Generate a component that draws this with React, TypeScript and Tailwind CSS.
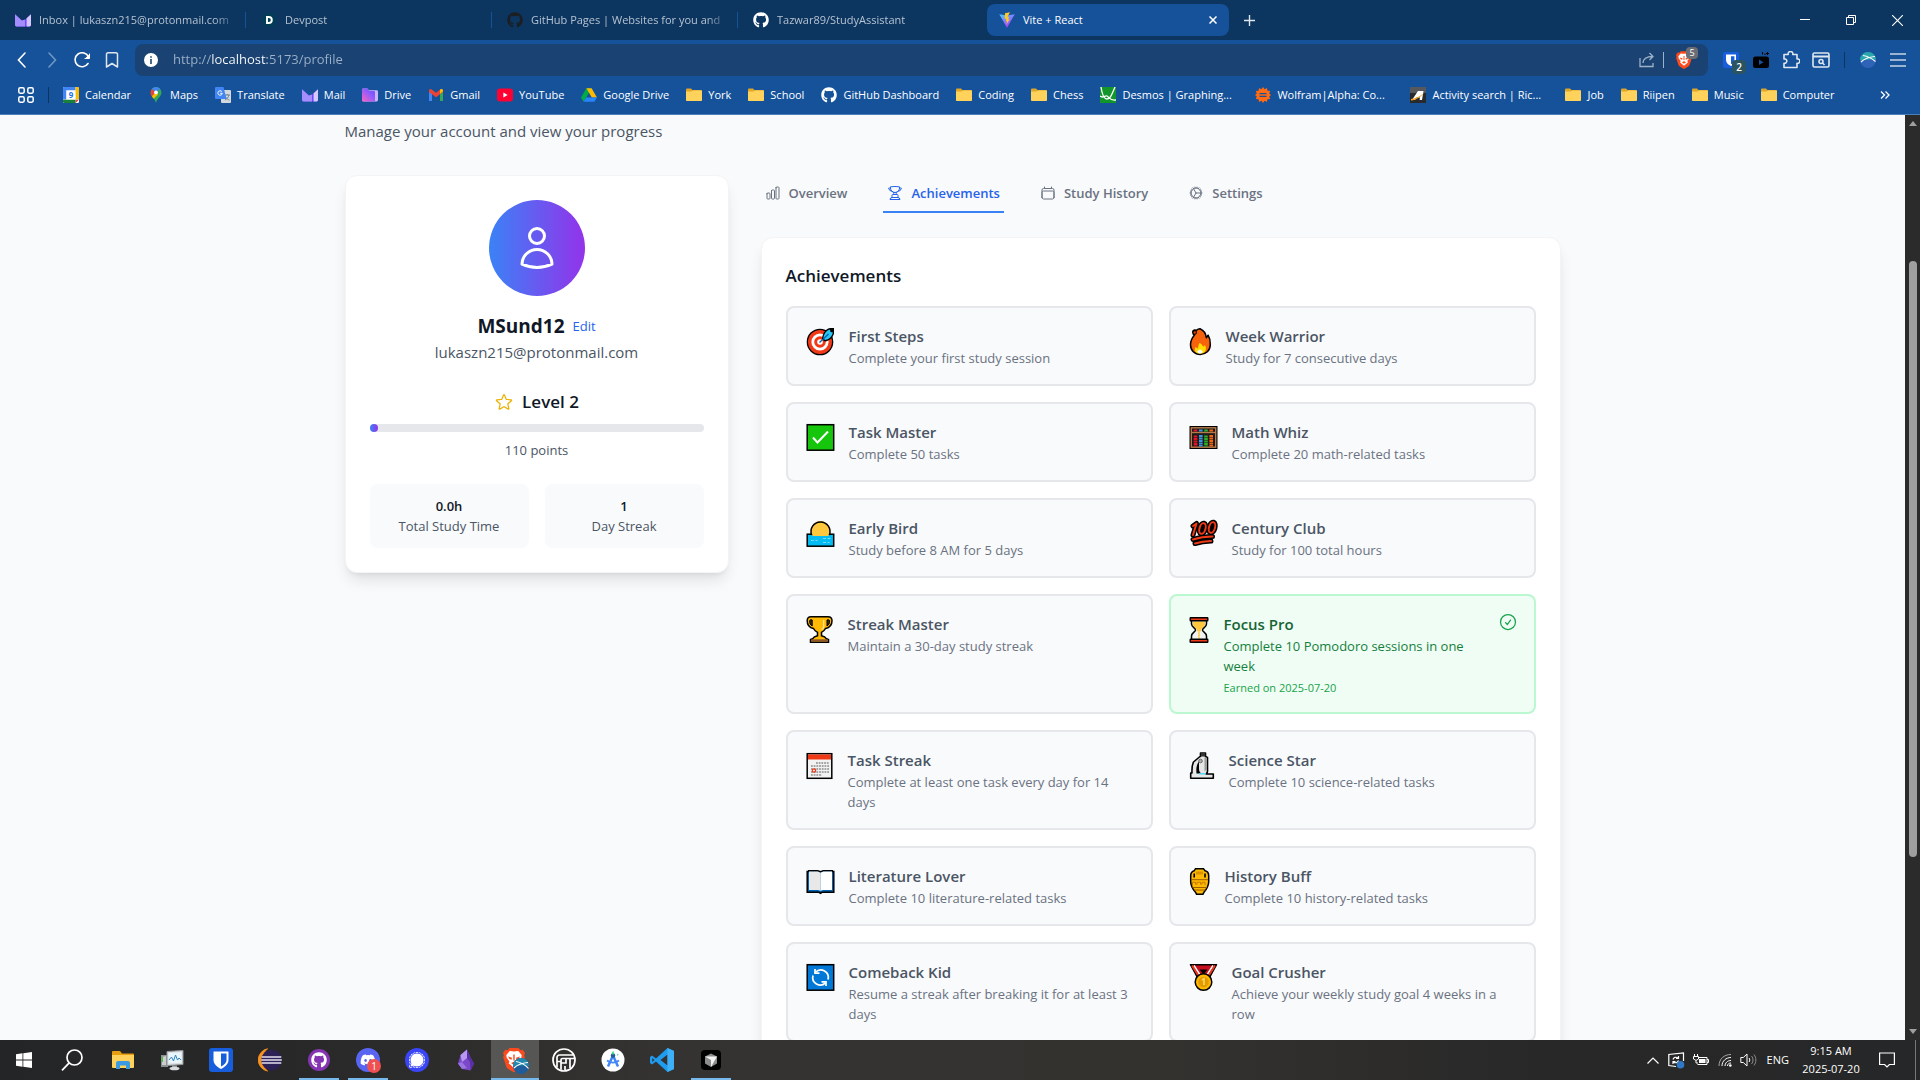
import React, { useState } from "react";
import {
    HiOutlineCalendar,
    HiOutlineChartBar,
    HiOutlineCheckCircle,
    HiOutlineCog,
    HiOutlineStar,
    HiOutlineTrophy,
    HiOutlineUser,
} from "react-icons/hi2";
import { FaDiscord, FaGithub } from "react-icons/fa";
import { SiSignal } from "react-icons/si";

/* ---------- Site icons ---------- */

const ProtonMailIcon = () => (
    <svg viewBox="0 0 16 16" className="w-4 h-4 shrink-0">
        <path d="M0 2.2 6.8 8.4a1.8 1.8 0 0 0 2.4 0L16 2.2V13a1.4 1.4 0 0 1-1.4 1.4H1.4A1.4 1.4 0 0 1 0 13Z" fill="#6d4aff" />
        <path d="M0 2.2 6.8 8.4 10 7.6v6.8H1.4A1.4 1.4 0 0 1 0 13Z" fill="#a58cff" />
        <path d="M11.6 6.3 16 2.2V13a1.4 1.4 0 0 1-1.4 1.4h-3Z" fill="#d6c8ff" />
    </svg>
);

const ProtonDriveIcon = () => (
    <svg viewBox="0 0 16 16" className="w-4 h-4 shrink-0">
        <defs>
            <linearGradient id="pdrive" x1="0" y1="1" x2="1" y2="0">
                <stop offset="0" stopColor="#ff62c0" />
                <stop offset="0.6" stopColor="#8c5cff" />
                <stop offset="1" stopColor="#6d4aff" />
            </linearGradient>
        </defs>
        <path d="M0 3a1.4 1.4 0 0 1 1.4-1.4h4l1.6 1.6h7.6A1.4 1.4 0 0 1 16 4.6V13a1.4 1.4 0 0 1-1.4 1.4H1.4A1.4 1.4 0 0 1 0 13Z" fill="#c9b6ff" />
        <path d="M0 3a1.4 1.4 0 0 1 1.4-1.4h4L7.4 4h4.4A1.2 1.2 0 0 1 13 5.2v9.2H1.4A1.4 1.4 0 0 1 0 13Z" fill="url(#pdrive)" />
    </svg>
);

const DevpostIcon = () => (
    <svg viewBox="0 0 16 16" className="w-4 h-4 shrink-0">
        <path d="M4.2 1.4h7.6L15.6 8l-3.8 6.6H4.2L.4 8Z" fill="#003e54" />
        <path d="M6 5h1.8a3 3 0 0 1 0 6H6Z" fill="none" stroke="#fff" strokeWidth="1.9" />
    </svg>
);

const ViteIcon = () => (
    <svg viewBox="0 0 16 16" className="w-4 h-4 shrink-0">
        <defs>
            <linearGradient id="vite" x1="0" y1="0" x2="0.6" y2="1">
                <stop offset="0" stopColor="#41d1ff" />
                <stop offset="1" stopColor="#bd34fe" />
            </linearGradient>
        </defs>
        <path d="M.3 2.2 8 15.8 15.7 2.2 8.2 3.6Z" fill="url(#vite)" />
        <path d="M11 .2 6 1.2 5.6 7l1.8-.4-.6 2.8 1.4-.4-.8 3.6 3.4-5.4-1.6.3.8-2.8-1.6.3Z" fill="#ffcb22" />
    </svg>
);

const CalendarFavicon = () => (
    <svg viewBox="0 0 16 16" className="w-4 h-4 shrink-0">
        <rect width="16" height="16" rx="1.5" fill="#fff" />
        <path d="M0 12.5V1.5A1.5 1.5 0 0 1 1.5 0H12.5v3.2H3.2v9.3Z" fill="#4285f4" />
        <path d="M12.5 0h2A1.5 1.5 0 0 1 16 1.5v11h-3.3Z" fill="#fbbc04" />
        <path d="M0 12.7h12.6V16H1.5A1.5 1.5 0 0 1 0 14.5Z" fill="#188038" />
        <path d="M12.6 12.7H16L12.6 16Z" fill="#ea4335" />
        <text x="8" y="11" fontSize="8" fontWeight="700" textAnchor="middle" fill="#1a73e8">9</text>
    </svg>
);

const MapsIcon = () => (
    <svg viewBox="0 0 16 16" className="w-4 h-4 shrink-0">
        <path d="M8 0a5.4 5.4 0 0 1 5.4 5.4C13.4 9.5 9.3 10.9 8 16 6.7 10.9 2.6 9.5 2.6 5.4A5.4 5.4 0 0 1 8 0Z" fill="#34a853" />
        <path d="M2.6 5.4A5.4 5.4 0 0 1 4 1.8L8 5.4 3.8 9.2A6 6 0 0 1 2.6 5.4Z" fill="#ea4335" />
        <path d="M4 1.8A5.4 5.4 0 0 1 12 1.8L8 5.8Z" fill="#4285f4" />
        <path d="M3.8 9.2 8 5.4l2 2-4.4 4.4Z" fill="#fbbc04" />
        <circle cx="8" cy="5.4" r="1.9" fill="#fff" />
    </svg>
);

const TranslateIcon = () => (
    <svg viewBox="0 0 16 16" className="w-4 h-4 shrink-0">
        <rect x="6" y="3" width="10" height="13" rx="1" fill="#d5d8dc" />
        <path d="M9.5 8H15M12.2 7v1M14 8c-.5 2.3-2 4-4 5M10.5 9.5c.8 1.8 2.2 3 4 3.6" stroke="#607d8b" strokeWidth="0.9" fill="none" />
        <path d="M1 0h7.5l3 12H1a1 1 0 0 1-1-1V1a1 1 0 0 1 1-1Z" fill="#4285f4" />
        <path d="M6.8 4.6a2.2 2.2 0 1 0 .5 1.7H5.2" stroke="#fff" strokeWidth="1" fill="none" />
    </svg>
);

const GmailIcon = () => (
    <svg viewBox="0 0 16 16" className="w-4 h-4 shrink-0">
        <path d="M1 14V4l3 2v8Z" fill="#4285f4" />
        <path d="M12 14V6l3-2v10Z" fill="#34a853" />
        <path d="M1 5V3.500a1.500 1.500 0 0 1 2.400-1.200L8 5.800l4.600-3.500A1.500 1.500 0 0 1 15 3.500V5L8 10.200Z" fill="#ea4335" />
        <path d="M12 2.800A1.600 1.600 0 0 1 15 3.500v1L12 6.700Z" fill="#fbbc04" />
    </svg>
);

const YouTubeIcon = () => (
    <svg viewBox="0 0 16 16" className="w-4 h-4 shrink-0">
        <rect y="1.500" width="16" height="13" rx="3" fill="#ff0033" />
        <path d="M6.4 5.600v4.800L10.600 8Z" fill="#fff" />
    </svg>
);

const GoogleDriveIcon = () => (
    <svg viewBox="0 0 16 16" className="w-4 h-4 shrink-0">
        <path d="M5.4 1.200h5.200L8 5.800 2.700 14.800 0 10.400Z" fill="#00ac47" />
        <path d="M5.4 1.200h5.200L16 10.400h-5.200Z" fill="#ffba00" />
        <path d="M5.300 10.400H16l-2.700 4.400H2.700Z" fill="#2684fc" />
    </svg>
);

const FolderIcon = () => (
    <svg viewBox="0 0 16 16" className="w-4 h-4 shrink-0">
        <path d="M0 2.500a1 1 0 0 1 1-1h4l1.500 1.500H15a1 1 0 0 1 1 1V13H0Z" fill="#dfa62a" />
        <path d="M0 4.500h5.500L7 3.500h8.200a.8.800 0 0 1 .8.800V13.200a.8.800 0 0 1-.8.800H.8a.8.800 0 0 1-.8-.8Z" fill="#ffd35b" />
    </svg>
);

const DesmosIcon = () => (
    <svg viewBox="0 0 16 16" className="w-4 h-4 shrink-0">
        <rect width="16" height="16" fill="#12962c" />
        <path d="M1 0c1 7 3 12 6 12s4-2.500 8-12" fill="none" stroke="#fff" strokeWidth="1.300" />
        <path d="M0 9c3 3 5-1 7 0s3 5 9 4" fill="none" stroke="#fff" strokeWidth="1.300" />
    </svg>
);

const WolframIcon = () => (
    <svg viewBox="0 0 16 16" className="w-4 h-4 shrink-0">
        <path d="m8 0 1.600 2.300L12 1l.4 2.800 2.800.2-1 2.500L16 8l-1.800 1.500 1 2.500-2.800.2L12 15l-2.400-1.300L8 16l-1.600-2.300L4 15l-.4-2.800L.8 12l1-2.500L0 8l1.800-1.500L.8 4l2.800-.2L4 1l2.400 1.300Z" fill="#ff6a13" />
        <path d="M4.500 6h7v1.300h-7Zm0 2.800h7v1.300h-7Z" fill="#15529a" />
    </svg>
);

const ActivityIcon = () => (
    <svg viewBox="0 0 16 16" className="w-4 h-4 shrink-0">
        <rect width="16" height="16" fill="#2a2a2c" />
        <rect width="16" height="6" fill="#57585b" />
        <path d="M2 13 8 4h5.500L12 13H9.600l.4-2.500H6.500L5 13Z" fill="#fff" />
        <path d="M1 12c5-.5 9-3 13-6-3 4-8 7-13 7.500Z" fill="#f5a11c" />
    </svg>
);

const BraveIcon = ({ className }: { className: string }) => (
    <svg viewBox="0 0 22 24" className={className}>
        <path d="M6.500 0h9l2 2.200 2.200-.4L22 5l-.8 2.200.6 2-3 9.300c-.4 1.200-1 1.800-2 2.500L12.500 23.600a2.600 2.600 0 0 1-3 0L5.200 21c-1-.7-1.600-1.300-2-2.500L.2 9.200l.6-2L0 5l2.300-3.200 2.200.4Z" fill="#fb4a1e" />
        <path d="M11 3.500c1.500 0 3-.7 4.500-.3L18.700 7l-.3 2.500-2.800 4 .7 2-2 1.500L11 20l-3.300-3-2-1.500.7-2-2.800-4L3.300 7l3.200-3.800c1.500-.4 3 .3 4.500.3Z" fill="#fff" />
        <path d="m5 8.500 4 1.200-.5 2-2-.7ZM17 8.500l-4 1.200.5 2 2-.7ZM8 15l3-1.300L14 15l-3 2.300ZM10.300 6.500h1.400v6h-1.400Z" fill="#fb4a1e" />
    </svg>
);

/* ---------- Achievement pictures ---------- */

const TargetPic = () => (
    <svg viewBox="0 0 33 32" className="w-[33px] h-8">
        <circle cx="16" cy="18" r="13.300" fill="#000" />
        <circle cx="16" cy="18" r="12" fill="#f03a17" />
        <circle cx="16" cy="18" r="8.600" fill="#fff" />
        <circle cx="16" cy="18" r="5.800" fill="#f03a17" />
        <circle cx="16" cy="18" r="2.800" fill="#fff" />
        <path d="M18 15.500c0-5 3-10.500 8-11.500h4v5.500c-1 4-4.500 7.500-9 8Z" fill="#000" />
        <path d="M19.500 14.500c0-4 2.500-7.800 6.500-9l.5 2.500 2.500.5c-1.300 4.500-4 7-8 7.500Z" fill="#29c8f6" />
        <path d="m15.500 18.500 9-8.500" stroke="#0063b1" strokeWidth="1.300" />
    </svg>
);

const FlamePic = () => (
    <svg viewBox="0 0 27 32" className="w-[27px] h-8">
        <path d="M13 4.700c4.500 2 6 5 6.300 9l1.800-2.500c1.600 2.500 2.300 6 2.200 9.500-.2 6-4.300 9.700-10 9.700S3.500 26.500 3.500 20.500c0-4 1.500-6.500 4-9.500-2-.5-2.500-4.500 0-5l2 .3c1-1 2.200-1.600 3.500-1.600Z" fill="#f7630c" stroke="#000" strokeWidth="1.500" strokeLinejoin="round" />
        <circle cx="7.800" cy="8.500" r="1.800" fill="#c8420a" stroke="#000" strokeWidth="1" />
        <path d="M12.500 19c3.200 1 2.500 3 4 3.500 1 0 1-1.500 1.500-1.500 2.500 5-.5 8.600-4.800 8.600S6.300 27 8.500 23c1 0 1 1.500 1.800 1.500 1.500-1 .7-3.500 2.200-5.500Z" fill="#ffde00" />
        <path d="M10 27.500c1-.3 1.500-2 3-2 2 0 1.500 2 3 2-.5 1.300-1.500 2-3 2s-2.500-.7-3-2Z" fill="#fff" />
    </svg>
);

const CheckPic = () => (
    <svg viewBox="0 0 33 32" className="w-[33px] h-8">
        <rect x="3.200" y="4.700" width="26.500" height="25.500" fill="#16c60c" stroke="#000" strokeWidth="1.500" />
        <path d="m9 17.500 4.500 5L24 11.500" fill="none" stroke="#fff" strokeWidth="2" />
    </svg>
);

const AbacusPic = () => (
    <svg viewBox="0 0 33 32" className="w-[33px] h-8">
        <rect x="2.500" y="6" width="28" height="23" fill="#000" />
        <rect x="4.300" y="7.800" width="24.400" height="19.400" fill="#1b1b1b" stroke="#b87a4b" strokeWidth="1.400" />
        <path d="M4 12.500h25" stroke="#b87a4b" strokeWidth="1.400" />
        <g strokeWidth="3.600" strokeDasharray="2 0.500">
            <path d="M8.500 9.500v2.200M8.500 15.500v11" stroke="#e81224" />
            <path d="M13.800 9.500v2.200M13.800 15v11.500" stroke="#3a96dd" />
            <path d="M19 9.500v2.200M19 15.500v11" stroke="#2fae2a" />
            <path d="M24.200 9.500v2.200M24.200 15v11.500" stroke="#f7630c" />
        </g>
    </svg>
);

const SunrisePic = () => (
    <svg viewBox="0 0 33 32" className="w-[33px] h-8">
        <rect x="3.200" y="18.200" width="26.500" height="12" fill="#00bcf2" stroke="#000" strokeWidth="1.500" />
        <path d="M8.700 20a9.500 9.500 0 1 1 15.600 0Z" fill="#ffc83d" />
        <path d="M7.700 19a9.500 9.500 0 1 1 17.600 0" fill="none" stroke="#000" strokeWidth="1.500" />
        <path d="M19 22.500h3M23.500 22.500h3M7 24.500h3M11.500 24.500h2M19 26.500h3M23.500 26.500h2" stroke="#7fdcf7" strokeWidth="0.900" />
    </svg>
);

const HundredPic = () => (
    <svg viewBox="0 0 33 32" className="w-[33px] h-8" fill="none" strokeLinecap="round" strokeLinejoin="round">
        <g stroke="#000" strokeWidth="5">
            <path d="m6 10 3.500-2.500L6 19" />
            <ellipse cx="15.500" cy="12.500" rx="3" ry="5.500" transform="rotate(16 15.500 12.500)" fill="#000" />
            <ellipse cx="25" cy="11.500" rx="3" ry="5.500" transform="rotate(16 25 11.500)" fill="#000" />
            <path d="M6 23.500c6-2 13-3 19.500-3M8 27.500c6-1.800 11-2.300 16-2.500" />
        </g>
        <g stroke="#f03a17" strokeWidth="2">
            <path d="m6 10 3.500-2.500L6 19" />
            <ellipse cx="15.500" cy="12.500" rx="3" ry="5.500" transform="rotate(16 15.500 12.500)" />
            <ellipse cx="25" cy="11.500" rx="3" ry="5.500" transform="rotate(16 25 11.500)" />
            <path d="M6 23.500c6-2 13-3 19.500-3M8 27.500c6-1.800 11-2.300 16-2.500" />
        </g>
    </svg>
);

const TrophyPic = () => (
    <svg viewBox="0 0 32 32" className="w-8 h-8">
        <path d="M7 4.700h17c2.500 0 4 1.500 4 4 0 4.500-2.500 7-6.500 7.800-1 2-2.500 3-4 3.800v3.500c2 .5 4 1.500 5 3l2 .7v2.700H6.500v-2.700l2-.7c1-1.500 3-2.500 5-3v-3.500c-1.500-.8-3-1.800-4-3.800C5.500 15.700 3.200 13.200 3.200 8.700c0-2.500 1.300-4 3.800-4Z" fill="#ffb900" stroke="#000" strokeWidth="1.500" />
        <path d="M8.200 8v6C6.500 13 5.600 11.500 5.600 9c0-1 1-1.600 2.600-1ZM23 8v6c1.700-1 2.600-2.500 2.600-5 0-1-1-1.600-2.600-1Z" fill="#3b2a0a" stroke="#000" />
        <path d="M7.200 27.300h16.600v2.200H7.200Z" fill="#8e562e" />
        <path d="M19.700 8v7c-.3 1-1.200 2-2.200 2.500" fill="none" stroke="#ffe48a" strokeWidth="1.400" />
    </svg>
);

const HourglassPic = () => (
    <svg viewBox="0 0 25 32" className="w-[25px] h-8">
        <path d="M4.500 8v4c0 3 4 4 4 6s-4 2.500-4 6v4h15v-4c0-3.500-4-4-4-6s4-3 4-6V8Z" fill="#f2f2f2" stroke="#000" strokeWidth="1.500" />
        <path d="M6 9.500h12V13c-1 2.500-4 3.500-4 5.500V27h-4v-8.500C10 16.500 7 15 6 13Z" fill="#ffc83d" />
        <path d="M10 19.500v3L6.500 27h11L14 22.500v-3l-1.300-.5v8h-1.400v-8Z" fill="#f2f2f2" />
        <rect x="3.200" y="5.700" width="17.600" height="3" rx="0.500" fill="#f03a17" stroke="#000" strokeWidth="1.400" />
        <rect x="3.200" y="27.300" width="17.600" height="3" rx="0.500" fill="#f03a17" stroke="#000" strokeWidth="1.400" />
    </svg>
);

const CalendarPic = () => (
    <svg viewBox="0 0 32 32" className="w-8 h-8">
        <rect x="3.200" y="5.700" width="24.600" height="24.600" fill="#f2f2f2" stroke="#000" strokeWidth="1.500" />
        <rect x="4" y="6.500" width="23" height="5" fill="#f03a17" />
        <path d="M12 15h13M7 18h18M7 21h18M7 24h18M7 27h11" stroke="#8a8a8a" strokeWidth="1.700" strokeDasharray="1.800 0.900" />
        <circle cx="10" cy="22.500" r="1.700" fill="none" stroke="#f03a17" strokeWidth="1.200" />
    </svg>
);

const MicroscopePic = () => (
    <svg viewBox="0 0 30 32" className="w-[30px] h-8" strokeLinejoin="round">
        <path d="M13 8.500 6.500 14c-1.500 3-1.700 7-1.500 11H3.700v5.300h22.600V26H19c1.500-1 1.700-2.500 1.500-4V9.500l-2-1V5h-5v3.500Z" fill="#e6e6e6" stroke="#000" strokeWidth="1.600" />
        <path d="M12 13.500v7.500c0 2 1 3.500 2.500 4.500h-5c-.5-5 0-9 2.500-12Z" fill="#000" />
        <path d="M13.800 5h4.400v3.500h-4.400Z" fill="#333" />
        <path d="M17.500 9.500h2v12l-2 2Z" fill="#9a9a9a" />
        <path d="M12 25.800h7" stroke="#50d5f5" strokeWidth="1.400" />
        <circle cx="13.500" cy="13" r="1.800" fill="#b0b0b0" stroke="#555" strokeWidth="0.800" />
    </svg>
);

const BookPic = () => (
    <svg viewBox="0 0 33 32" className="w-[33px] h-8">
        <path d="M3.200 7.500h1.500V6.700h9l2.800 1 2.800-1h9v.8h1.500v20.800H18l-1.500 1-1.500-1H3.200Z" fill="#0063b1" stroke="#000" strokeWidth="1.500" />
        <path d="M5 7.500h8.800l2.700 1.200v18L13.800 26H5Z" fill="#e8e8e8" />
        <path d="M28 7.500h-8.800l-2.700 1.200v18l2.700-.7H28Z" fill="#fff" />
    </svg>
);

const AmphoraPic = () => (
    <svg viewBox="0 0 26 32" className="w-[26px] h-8">
        <path d="M8.500 4.700h8l1.500 2c2.500.5 3.700 2.500 3.700 5v6c0 4-2.200 7.500-4.700 10.500l-1 2H9.500l-1-2c-2.700-3-4.800-6.500-4.800-10.500v-6c0-2.500 1.300-4.500 3.600-5Z" fill="#ffb900" stroke="#000" strokeWidth="1.500" />
        <path d="M7.200 9.500v4M18 9.500v4" stroke="#000" strokeWidth="1.600" />
        <path d="M4.500 15.700h16.600M5.500 23.500h14.600M7 26h11.500" stroke="#9b5c00" strokeWidth="1" />
        <path d="M5.500 21.500v-3.300h3v2h1.500v-2h3.500v2h1.500v-2H18v3" fill="none" stroke="#c47a00" strokeWidth="1" />
        <path d="M9 7.500h7v3H9Z" fill="#d99200" />
    </svg>
);

const RefreshPic = () => (
    <svg viewBox="0 0 33 32" className="w-[33px] h-8">
        <rect x="3.200" y="4.700" width="26.500" height="25.500" fill="#0078d7" stroke="#000" strokeWidth="1.500" />
        <path d="M24 19.500a7.500 7.500 0 0 0-12.500-7.300M9 15.500a7.500 7.500 0 0 0 12.500 7.300" fill="none" stroke="#fff" strokeWidth="1.700" />
        <path d="M11 9v4.200h4.500M22 26v-4.200h-4.500" fill="none" stroke="#fff" strokeWidth="1.700" />
    </svg>
);

const MedalPic = () => (
    <svg viewBox="0 0 33 32" className="w-[33px] h-8">
        <path d="M3.500 4.700h26L22 18.500H11Z" fill="#c50f1f" stroke="#000" strokeWidth="1.500" strokeLinejoin="round" />
        <path d="M12.500 9.500h8l-4 5Z" fill="#000" />
        <path d="m7 5.500 7 11M26 5.500l-7 11" stroke="#fff" strokeWidth="1.500" />
        <path d="m5 5.500 7.500 12M28 5.500l-7.500 12" stroke="#f03a17" strokeWidth="1.800" />
        <circle cx="16.500" cy="22" r="8.300" fill="#ffb900" stroke="#000" strokeWidth="1.500" />
        <circle cx="16.500" cy="22" r="5.300" fill="#e39b00" />
        <path d="m15 20 2-1.300V25" fill="none" stroke="#ffd75e" strokeWidth="1.500" />
    </svg>
);

/* ---------- Data ---------- */

const browserTabs = [
    { title: "Inbox | lukaszn215@protonmail.com", icon: <ProtonMailIcon /> },
    { title: "Devpost", icon: <DevpostIcon /> },
    { title: "GitHub Pages | Websites for you and", icon: <FaGithub className="w-4 h-4 shrink-0 text-[#1b1f24]" /> },
    { title: "Tazwar89/StudyAssistant", icon: <FaGithub className="w-4 h-4 shrink-0 text-white" /> },
];

const bookmarks = [
    { title: "Calendar", icon: <CalendarFavicon /> },
    { title: "Maps", icon: <MapsIcon /> },
    { title: "Translate", icon: <TranslateIcon /> },
    { title: "Mail", icon: <ProtonMailIcon /> },
    { title: "Drive", icon: <ProtonDriveIcon /> },
    { title: "Gmail", icon: <GmailIcon /> },
    { title: "YouTube", icon: <YouTubeIcon /> },
    { title: "Google Drive", icon: <GoogleDriveIcon /> },
    { title: "York", icon: <FolderIcon /> },
    { title: "School", icon: <FolderIcon /> },
    { title: "GitHub Dashboard", icon: <FaGithub className="w-4 h-4 shrink-0" /> },
    { title: "Coding", icon: <FolderIcon /> },
    { title: "Chess", icon: <FolderIcon /> },
    { title: "Desmos | Graphing...", icon: <DesmosIcon />, long: true },
    { title: "Wolfram|Alpha: Co...", icon: <WolframIcon />, long: true },
    { title: "Activity search | Ric...", icon: <ActivityIcon />, long: true },
    { title: "Job", icon: <FolderIcon /> },
    { title: "Riipen", icon: <FolderIcon /> },
    { title: "Music", icon: <FolderIcon /> },
    { title: "Computer", icon: <FolderIcon /> },
];

const profileTabs = [
    { id: "overview", label: "Overview", icon: HiOutlineChartBar },
    { id: "achievements", label: "Achievements", icon: HiOutlineTrophy },
    { id: "history", label: "Study History", icon: HiOutlineCalendar },
    { id: "settings", label: "Settings", icon: HiOutlineCog },
];

type Achievement = {
    title: string;
    description: string;
    picture: React.ReactNode;
    earned?: string;
};

const achievements: Achievement[] = [
    { title: "First Steps", description: "Complete your first study session", picture: <TargetPic /> },
    { title: "Week Warrior", description: "Study for 7 consecutive days", picture: <FlamePic /> },
    { title: "Task Master", description: "Complete 50 tasks", picture: <CheckPic /> },
    { title: "Math Whiz", description: "Complete 20 math-related tasks", picture: <AbacusPic /> },
    { title: "Early Bird", description: "Study before 8 AM for 5 days", picture: <SunrisePic /> },
    { title: "Century Club", description: "Study for 100 total hours", picture: <HundredPic /> },
    { title: "Streak Master", description: "Maintain a 30-day study streak", picture: <TrophyPic /> },
    { title: "Focus Pro", description: "Complete 10 Pomodoro sessions in one week", picture: <HourglassPic />, earned: "2025-07-20" },
    { title: "Task Streak", description: "Complete at least one task every day for 14 days", picture: <CalendarPic /> },
    { title: "Science Star", description: "Complete 10 science-related tasks", picture: <MicroscopePic /> },
    { title: "Literature Lover", description: "Complete 10 literature-related tasks", picture: <BookPic /> },
    { title: "History Buff", description: "Complete 10 history-related tasks", picture: <AmphoraPic /> },
    { title: "Comeback Kid", description: "Resume a streak after breaking it for at least 3 days", picture: <RefreshPic /> },
    { title: "Goal Crusher", description: "Achieve your weekly study goal 4 weeks in a row", picture: <MedalPic /> },
];

/* ---------- Browser ---------- */

function TabStrip() {
    return (
        <div className="h-10 bg-[#0c3560] flex items-center text-[11px] text-[#b6c3d1]">
            {browserTabs.map((tab, i) => (
                <div key={tab.title} className="w-[246px] h-10 flex items-center relative">
                    <button className="flex items-center gap-2 pl-[15px] pr-2 w-full text-left">
                        {tab.icon}
                        <span className="flex-1 whitespace-nowrap [mask-image:linear-gradient(90deg,#000_88%,transparent)]">
                            {tab.title}
                        </span>
                    </button>
                    {i < 3 && <div className="absolute right-0 top-3 w-px h-4 bg-[#15529a]" />}
                </div>
            ))}
            <div className="w-[242px] h-8 ml-[3px] rounded-lg bg-[#15529a] text-white flex items-center px-3 gap-2">
                <ViteIcon />
                <span className="flex-1">Vite + React</span>
                <button aria-label="Close tab" className="w-4 h-4 flex items-center justify-center -mr-1">
                    <svg viewBox="0 0 8 8" className="w-2 h-2">
                        <path d="m0.500 0.500 7 7m0-7-7 7" stroke="#fff" strokeWidth="1.500" />
                    </svg>
                </button>
            </div>
            <button aria-label="New tab" className="w-10 h-8 flex items-center justify-center">
                <svg viewBox="0 0 12 12" className="w-[11px] h-[11px]">
                    <path d="M6 0v12M0 6h12" stroke="#dfe6ee" strokeWidth="1.500" />
                </svg>
            </button>
            <div className="ml-auto flex">
                <button aria-label="Minimize" className="w-[46px] h-10 flex items-center justify-center">
                    <svg viewBox="0 0 10 10" className="w-[10px] h-[10px]"><path d="M0 4.500h10" stroke="#fff" /></svg>
                </button>
                <button aria-label="Restore" className="w-[46px] h-10 flex items-center justify-center">
                    <svg viewBox="0 0 10 10" className="w-[10px] h-[10px]" fill="none" stroke="#fff">
                        <path d="M0.500 2.500h7v7h-7ZM2.500 2.500v-2h7v7h-2" />
                    </svg>
                </button>
                <button aria-label="Close" className="w-[46px] h-10 flex items-center justify-center">
                    <svg viewBox="0 0 10 10" className="w-[11px] h-[11px]"><path d="m0 0 10 10M10 0 0 10" stroke="#fff" /></svg>
                </button>
            </div>
        </div>
    );
}

function AddressBar() {
    const [url, setUrl] = useState("http://localhost:5173/profile");
    return (
        <div className="h-10 flex items-center pl-[7px] pr-[7px] text-white">
            <button aria-label="Back" className="w-[30px] h-8 flex items-center justify-center">
                <svg viewBox="0 0 16 16" className="w-4 h-4" fill="none" stroke="#fff" strokeWidth="1.600" strokeLinecap="round"><path d="M11 1 4.500 8l6.500 7" /></svg>
            </button>
            <button aria-label="Forward" className="w-[30px] h-8 flex items-center justify-center">
                <svg viewBox="0 0 16 16" className="w-4 h-4" fill="none" stroke="#6f97c4" strokeWidth="1.600" strokeLinecap="round"><path d="m5 1 6.500 7L5 15" /></svg>
            </button>
            <button aria-label="Reload" className="w-[30px] h-8 flex items-center justify-center">
                <svg viewBox="0 0 16 16" className="w-4 h-4" fill="none" stroke="#fff" strokeWidth="1.600" strokeLinecap="round">
                    <path d="M14 11.500A7 7 0 1 1 14.500 5" />
                    <path d="M15.500 2v4.500H11" fill="#fff" strokeWidth="1" />
                </svg>
            </button>
            <button aria-label="Bookmark" className="w-[30px] h-8 flex items-center justify-center">
                <svg viewBox="0 0 16 16" className="w-4 h-4" fill="none" stroke="#dfe6ee" strokeWidth="1.500" strokeLinejoin="round"><path d="M2.500 2A1.500 1.500 0 0 1 4 .8h8A1.500 1.500 0 0 1 13.500 2v13L8 11.500 2.500 15Z" /></svg>
            </button>
            <div className="flex-1 h-8 ml-2 rounded-lg bg-[#1a4373] flex items-center pl-[9px] pr-2">
                <svg viewBox="0 0 14 14" className="w-[14px] h-[14px] shrink-0">
                    <circle cx="7" cy="7" r="7" fill="#fff" />
                    <path d="M7 3.200v1.600M7 6v5" stroke="#1a4373" strokeWidth="1.600" />
                </svg>
                <input
                    aria-label="Address"
                    value={url}
                    onChange={(e) => setUrl(e.target.value)}
                    className="flex-1 ml-[15px] text-[13px] outline-none text-transparent caret-white bg-clip-text bg-[linear-gradient(90deg,#9db1c8_39px,#fff_39px,#fff_94px,#9db1c8_94px)]"
                />
                <button aria-label="Share">
                    <svg viewBox="0 0 16 16" className="w-4 h-4" fill="none" stroke="#9db1c8" strokeWidth="1.300">
                        <path d="M1 6v8.500h13V11M4 11c0-4 3-6.500 10-6.500M10.500 1 14 4.500 10.500 8" />
                    </svg>
                </button>
                <div className="w-px h-4 bg-[#9db1c8] mx-2" />
                <button aria-label="Brave Shields" className="relative ml-1 mr-2">
                    <BraveIcon className="w-4 h-[18px]" />
                    <span className="absolute -top-1 left-[10px] w-3 h-3 rounded-sm bg-[#6b6d75] text-white text-[9px] leading-3 text-center">5</span>
                </button>
            </div>
            <div className="flex items-center ml-2">
                <button aria-label="Bitwarden" className="w-[30px] h-8 flex items-center justify-center relative">
                    <svg viewBox="0 0 16 16" className="w-4 h-4">
                        <rect width="16" height="16" rx="2" fill="#175ddc" />
                        <path d="M3 2.500h10V8c0 3-2.500 5-5 6-2.500-1-5-3-5-6Z" fill="#fff" />
                        <path d="M8 4.200h3.400V8c0 2-1.600 3.300-3.400 4.200Z" fill="#175ddc" />
                    </svg>
                    <span className="absolute left-4 top-4 w-[14px] h-[14px] rounded-sm bg-[#2b5360] text-white text-[10px] font-semibold leading-[14px] text-center">2</span>
                </button>
                <button aria-label="Video extension" className="w-[30px] h-8 flex items-center justify-center">
                    <svg viewBox="0 0 16 16" className="w-4 h-4">
                        <rect y="4.500" width="16" height="11.500" rx="2.500" fill="#000" />
                        <path d="M6 7.500v5.500l4.500-2.700Z" fill="#15529a" />
                        <path d="M9.500 0v2.500M12 1.500v1.500M14.500 0v3M13 1.500h3" stroke="#000" />
                    </svg>
                </button>
                <button aria-label="Extensions" className="w-[30px] h-8 flex items-center justify-center">
                    <svg viewBox="0 0 18 18" className="w-[18px] h-[18px]" fill="none" stroke="#dfe6ee" strokeWidth="1.600" strokeLinejoin="round">
                        <path d="M2 3.500h4.200a2.400 2.400 0 1 1 4.600 0H15V8a2.200 2.200 0 1 1 0 4.200V16.500H2v-4.300A2.200 2.200 0 1 0 2 8Z" />
                    </svg>
                </button>
                <button aria-label="Search tabs" className="w-[30px] h-8 flex items-center justify-center">
                    <svg viewBox="0 0 18 16" className="w-[18px] h-4" fill="none" stroke="#dfe6ee" strokeWidth="1.600">
                        <rect x="1" y="1" width="16" height="14" rx="1.500" />
                        <path d="M1 4.500h16" strokeWidth="2" />
                        <circle cx="9" cy="9.500" r="2" />
                        <path d="m10.500 11 2 2" />
                    </svg>
                </button>
                <div className="w-px h-4 bg-[#0c3560] mx-2" />
                <button aria-label="Profile" className="w-[30px] h-8 flex items-center justify-center">
                    <svg viewBox="0 0 16 16" className="w-4 h-4">
                        <circle cx="8" cy="8" r="8" fill="#2f63b8" />
                        <path d="M0 8a8 8 0 0 1 16 0C11 6 6 9 0 8Z" fill="#2aa6ad" />
                        <path d="M1 10c3-3 8-5 14-5.500M3 3.500c3 .5 8 2 12.500 6" fill="none" stroke="#fff" strokeWidth="1.100" />
                    </svg>
                </button>
                <button aria-label="Menu" className="w-[30px] h-8 flex items-center justify-center">
                    <svg viewBox="0 0 16 14" className="w-4 h-[14px]"><path d="M0 1h16M0 7h16M0 13h16" stroke="#c5d3e3" strokeWidth="1.600" /></svg>
                </button>
            </div>
        </div>
    );
}

function BookmarkBar() {
    return (
        <nav className="h-[35px] flex items-center pb-1 text-[11px] text-white border-b border-[#4d80b8]">
            <button aria-label="All apps" className="ml-[18px] w-4 h-4">
                <svg viewBox="0 0 16 16" className="w-4 h-4" fill="none" stroke="#fff" strokeWidth="1.500">
                    <rect x="0.800" y="0.800" width="5.400" height="5.400" rx="1.400" />
                    <rect x="9.800" y="0.800" width="5.400" height="5.400" rx="1.400" />
                    <rect x="0.800" y="9.800" width="5.400" height="5.400" rx="1.400" />
                    <rect x="9.800" y="9.800" width="5.400" height="5.400" rx="1.400" />
                </svg>
            </button>
            <div className="w-px h-4 bg-[#0c3560] mx-[14px]" />
            <div className="flex items-center gap-[17px]">
                {bookmarks.map((item) => (
                    <a
                        key={item.title}
                        href="#"
                        className={`flex items-center gap-[6px] whitespace-nowrap ${item.long ? "min-w-[138px]" : ""}`}
                    >
                        {item.icon}
                        {item.title}
                    </a>
                ))}
            </div>
            <button aria-label="More bookmarks" className="ml-auto mr-[30px]">
                <svg viewBox="0 0 10 8" className="w-[10px] h-2" fill="none" stroke="#fff" strokeWidth="1.300"><path d="m1 0.500 3.500 3.500L1 7.500M5.500 0.500 9 4 5.500 7.500" /></svg>
            </button>
        </nav>
    );
}

/* ---------- Profile page ---------- */

function ProfileCard() {
    return (
        <section className="bg-white rounded-xl shadow-lg border border-gray-100 p-6 text-center">
            <div className="w-24 h-24 mx-auto rounded-full bg-linear-to-r/srgb from-[#3b82f6] to-[#9333ea] flex items-center justify-center">
                <HiOutlineUser className="w-12 h-12 text-white" />
            </div>
            <div className="mt-4 flex items-center justify-center gap-2">
                <h2 className="text-[19px] leading-7 font-bold text-gray-900">MSund12</h2>
                <button className="text-[13px] leading-5 text-[#2563eb]">Edit</button>
            </div>
            <p className="text-[15px] leading-6 text-gray-600">lukaszn215@protonmail.com</p>
            <div className="mt-6 flex items-center justify-center gap-2">
                <HiOutlineStar className="w-5 h-5 text-[#eab308]" />
                <span className="text-[17px] leading-7 font-semibold text-gray-900">Level 2</span>
            </div>
            <div className="mt-2 h-2 rounded-full bg-gray-200">
                <div className="w-2 h-2 rounded-full bg-linear-to-r/srgb from-[#3b82f6] to-[#9333ea]" />
            </div>
            <p className="mt-2 text-[13px] leading-5 text-gray-600">110 points</p>
            <div className="mt-6 grid grid-cols-2 gap-4 text-[13px] leading-5">
                <div className="bg-gray-50 rounded-lg p-3">
                    <div className="font-semibold text-gray-900">0.0h</div>
                    <div className="text-gray-600">Total Study Time</div>
                </div>
                <div className="bg-gray-50 rounded-lg p-3">
                    <div className="font-semibold text-gray-900">1</div>
                    <div className="text-gray-600">Day Streak</div>
                </div>
            </div>
        </section>
    );
}

function AchievementCard({ title, description, picture, earned }: Achievement) {
    return (
        <div className={`rounded-lg border-2 p-4 flex items-start gap-3 ${earned ? "bg-[#f0fdf4] border-[#bbf7d0]" : "bg-gray-50 border-gray-200"}`}>
            <div className="shrink-0">{picture}</div>
            <div className="flex-1">
                <h4 className={`text-[15px] leading-6 font-semibold ${earned ? "text-[#166534]" : "text-gray-600"}`}>{title}</h4>
                <p className={`text-[13px] leading-5 ${earned ? "text-[#15803d]" : "text-gray-500"}`}>{description}</p>
                {earned && <p className="mt-1 text-[11px] leading-4 text-[#16a34a]">Earned on {earned}</p>}
            </div>
            {earned && <HiOutlineCheckCircle className="w-5 h-5 shrink-0 text-[#16a34a]" />}
        </div>
    );
}

function ProfilePage() {
    const [activeTab, setActiveTab] = useState("achievements");
    return (
        <div className="max-w-7xl mx-auto px-8 pt-1">
            <p className="text-[15px] leading-6 text-gray-600 mb-8">Manage your account and view your progress</p>
            <div className="grid grid-cols-3 gap-8 items-start">
                <ProfileCard />
                <div className="col-span-2">
                    <div className="flex gap-8 mb-6">
                        {profileTabs.map(({ id, label, icon: Icon }) => (
                            <button
                                key={id}
                                onClick={() => setActiveTab(id)}
                                className={`flex items-center gap-2 px-1 py-2 border-b-2 text-[13px] leading-5 font-semibold ${
                                    activeTab === id ? "border-[#3b82f6] text-[#2563eb]" : "border-transparent text-gray-500"
                                }`}
                            >
                                <Icon className="w-4 h-4" />
                                {label}
                            </button>
                        ))}
                    </div>
                    <section className="bg-white rounded-xl shadow-lg border border-gray-100 p-6">
                        <h3 className="text-[17px] leading-7 font-semibold text-gray-900 mb-4">Achievements</h3>
                        <div className="grid grid-cols-2 gap-4">
                            {achievements.map((a) => (
                                <AchievementCard key={a.title} {...a} />
                            ))}
                        </div>
                    </section>
                </div>
            </div>
        </div>
    );
}

function Scrollbar() {
    return (
        <div className="w-[15px] shrink-0 bg-[#2b2b2b] flex flex-col items-center py-[6px]">
            <svg viewBox="0 0 8 5" className="w-2 h-[5px]"><path d="M4 0 8 5H0Z" fill="#9f9f9f" /></svg>
            <div className="flex-1 w-2 flex flex-col">
                <div className="basis-[15%]" />
                <div className="basis-[66%] rounded-full bg-[#9f9f9f]" />
            </div>
            <svg viewBox="0 0 8 5" className="w-2 h-[5px]"><path d="M0 0h8L4 5Z" fill="#9f9f9f" /></svg>
        </div>
    );
}

/* ---------- Taskbar ---------- */

const taskbarApps = [
    {
        name: "File Explorer",
        icon: (
            <svg viewBox="0 0 24 24" className="w-6 h-6">
                <path d="M1 4a1 1 0 0 1 1-1h7l2 2.500h11a1 1 0 0 1 1 1V10H1Z" fill="#e59f10" />
                <path d="M1 7h22v12a1 1 0 0 1-1 1H2a1 1 0 0 1-1-1Z" fill="#ffd35b" />
                <path d="M5 21v-6a2 2 0 0 1 2-2h10a2 2 0 0 1 2 2v6h-4v-3.500H9V21Z" fill="#3c9be0" />
            </svg>
        ),
    },
    {
        name: "Task Manager",
        icon: (
            <svg viewBox="0 0 24 24" className="w-6 h-6">
                <path d="M1 7h7v12H1Z" fill="#8b9090" />
                <path d="m2 9 4-1v9H2Z" fill="#c8cfcc" />
                <rect x="1.500" y="9" width="1.500" height="5" fill="#59b84c" />
                <path d="m7 3.500 16-1v14l-16 1Z" fill="#d9dde0" stroke="#8f9599" />
                <path d="m8.500 5 13-.8v10.600l-13 .8Z" fill="#eaf5fc" />
                <path d="m9 12 2.500-3 2 4 2-6 2 5 1.500-2 2 2" fill="none" stroke="#2b86c5" strokeWidth="1" />
                <path d="M12 17.500h5V20h-5Z" fill="#9aa0a4" />
                <ellipse cx="14.500" cy="20.500" rx="5" ry="1.800" fill="#d9dde0" />
            </svg>
        ),
    },
    {
        name: "Bitwarden",
        icon: (
            <svg viewBox="0 0 24 24" className="w-6 h-6">
                <rect width="24" height="24" rx="3" fill="#175ddc" />
                <path d="M4.500 3.500h15V12c0 4-3.500 7-7.500 9-4-2-7.500-5-7.500-9Z" fill="#fff" />
                <path d="M12 5.500h5.500V12c0 2.800-2.500 5-5.500 6.600Z" fill="#175ddc" />
            </svg>
        ),
    },
    {
        name: "Eclipse",
        icon: (
            <svg viewBox="0 0 24 24" className="w-6 h-6">
                <path d="M9.500.8A11.300 11.300 0 0 0 9.500 23 14 14 0 0 1 9.500.8Z" fill="#f7941e" stroke="#f7941e" />
                <circle cx="13.500" cy="12" r="10.300" fill="#2c2255" />
                <path d="M3.700 9h19.600M3.200 12h20.600M3.700 15h19.600" stroke="#e4e0f0" strokeWidth="1.500" />
            </svg>
        ),
    },
    {
        name: "GitHub Desktop",
        open: true,
        icon: (
            <span className="w-[22px] h-[22px] rounded-full bg-[#8534b3] flex items-center justify-center">
                <FaGithub className="w-4 h-4 text-white" />
            </span>
        ),
    },
    {
        name: "Discord",
        open: true,
        icon: (
            <span className="relative w-6 h-6 rounded-full bg-[#5865f2] flex items-center justify-center">
                <FaDiscord className="w-4 h-4 text-white" />
                <span className="absolute left-[11px] top-[11px] w-[14px] h-[14px] rounded-full bg-[#f0504f] text-white text-[10px] leading-[14px] text-center">1</span>
            </span>
        ),
    },
    {
        name: "Signal",
        icon: (
            <span className="w-6 h-6 rounded-full bg-[#3a45f5] flex items-center justify-center">
                <SiSignal className="w-4 h-4 text-white" />
            </span>
        ),
    },
    {
        name: "Obsidian",
        icon: (
            <svg viewBox="0 0 24 24" className="w-6 h-6">
                <path d="M13 1.500 6.500 7 4 15.500l4 5.500 8.500 1.500 3.500-7-3-5Z" fill="#7b48c9" />
                <path d="M13 1.500 6.500 7 8 14l5-4Z" fill="#b79aef" />
                <path d="m8 14-4 1.500L8 21l5-1Z" fill="#9a74e0" />
                <path d="m13 10 3 4 .5 8.500L20 15.500l-3-5-4-9Z" fill="#5a2fa5" />
            </svg>
        ),
    },
    {
        name: "Brave",
        active: true,
        icon: (
            <span className="relative w-6 h-6">
                <BraveIcon className="w-[22px] h-6" />
                <svg viewBox="0 0 16 16" className="absolute left-[10px] top-[10px] w-4 h-4">
                    <circle cx="8" cy="8" r="8" fill="#1f5c9c" />
                    <path d="M0 8a8 8 0 0 1 16 0C11 6 6 9 0 8Z" fill="#2388ad" />
                    <path d="M1 10c3-3 8-5 14-5.500M3 3.500c3 .5 8 2 12.500 7" fill="none" stroke="#fff" strokeWidth="1.100" />
                </svg>
            </span>
        ),
    },
    {
        name: "FTP client",
        icon: (
            <svg viewBox="0 0 24 24" className="w-6 h-6" fill="none" stroke="#fff" strokeWidth="1.700">
                <circle cx="12" cy="12" r="11" />
                <path d="M5 19.500V9.500a2.500 2.500 0 0 1 2.500-2.500H21M5 13.500h3.500M9 21.500V12a1.500 1.500 0 0 1 1.500-1.500H14V15H9.500M13 22v-4M14 10.500h8M18 10.500V20" />
            </svg>
        ),
    },
    {
        name: "Android Studio",
        icon: (
            <svg viewBox="0 0 24 24" className="w-6 h-6">
                <circle cx="12" cy="12" r="11.500" fill="#fff" />
                <path d="m7 18.500 5-11 5 11" fill="none" stroke="#4285f4" strokeWidth="2.500" />
                <path d="M6 12.500c4 2.800 8 2.800 12 0" fill="none" stroke="#4285f4" strokeWidth="1.800" />
                <circle cx="12" cy="7.500" r="2.200" fill="#235a97" />
                <path d="M11.200 3.500h1.600v3h-1.600ZM16 5.500l1.500 1-1 1.500Z" fill="#3ddc84" />
            </svg>
        ),
    },
    {
        name: "Visual Studio Code",
        icon: (
            <svg viewBox="0 0 24 24" className="w-6 h-6">
                <path d="m17.500 0 6.500 3v18l-6.500 3L6 13.500 2 16.500l-2-1.500V9l2-1.500 4 3ZM17.500 6.500 10.500 12l7 5.500ZM2.300 10v4L4.500 12Z" fill="#1f9cf0" fillRule="evenodd" />
                <path d="m17.500 0 6.500 3v18l-6.500 3Z" fill="#3db0f7" />
            </svg>
        ),
    },
    {
        name: "Cursor",
        open: true,
        icon: (
            <svg viewBox="0 0 20 20" className="w-5 h-5">
                <rect width="20" height="20" rx="4" fill="#000" />
                <path d="m10 3.500 6 3v7l-6 3.500-6-3.500v-7Z" fill="#8c8c8c" />
                <path d="M4 6.500h12L10 17v-7Z" fill="#f2f2f2" />
            </svg>
        ),
    },
];

function Taskbar() {
    return (
        <footer className="h-10 shrink-0 flex items-stretch text-white bg-[linear-gradient(90deg,#242526_0%,#282828_15%,#343331_35%,#33322f_60%,#282828_80%,#262728_100%)]">
            <button aria-label="Start" className="w-12 flex items-center justify-center">
                <svg viewBox="0 0 16 16" className="w-4 h-4" fill="#fff"><path d="m0 2.200 6.500-.9v6.200H0ZM7.300 1.200 16 0v7.500H7.300ZM0 8.400h6.500v6.300L0 13.800ZM7.300 8.400H16V16l-8.700-1.200Z" /></svg>
            </button>
            <button aria-label="Search" className="w-12 flex items-center justify-center">
                <svg viewBox="0 0 22 22" className="w-[22px] h-[22px]" fill="none" stroke="#fff" strokeWidth="1.700"><circle cx="13.500" cy="8.500" r="7.500" /><path d="M8.200 13.800 1 21.300" /></svg>
            </button>
            <div className="flex gap-px ml-[3px]">
                {taskbarApps.map((app) => (
                    <button key={app.name} aria-label={app.name} className={`relative w-12 flex items-center justify-center ${app.active ? "bg-[#565655]" : ""}`}>
                        {app.icon}
                        {app.open && <span className="absolute bottom-0 inset-x-1 h-[2px] bg-[#76b9ed]" />}
                        {app.active && <span className="absolute bottom-0 inset-x-0 h-[2px] bg-[#76b9ed]" />}
                    </button>
                ))}
            </div>
            <div className="ml-auto flex items-center text-[11px]">
                <button aria-label="Show hidden icons" className="w-6 flex justify-center">
                    <svg viewBox="0 0 12 7" className="w-3 h-[7px]" fill="none" stroke="#fff" strokeWidth="1.200"><path d="m0.500 6.500 5.500-5.500 5.500 5.500" /></svg>
                </button>
                <button aria-label="Sync" className="w-6 flex justify-center">
                    <svg viewBox="0 0 17 17" className="w-[17px] h-[17px]" fill="none" stroke="#fff" strokeWidth="1.200">
                        <path d="M8 14.500.8 13.500v-11L15.500.8V9" />
                        <path d="M5 7.500c.5-2 3-3 5-1.500M10.500 4v2.500H8M10.500 8.500c-.5 2-3 3-5 1.500M5 12V9.500h2.500" />
                        <circle cx="12.500" cy="12.800" r="3.800" fill="#2f78c8" stroke="none" />
                    </svg>
                </button>
                <button aria-label="Battery" className="w-6 flex justify-center">
                    <svg viewBox="0 0 16 12" className="w-4 h-3" fill="none" stroke="#fff">
                        <path d="M5 3.500h9v7H4.500M14 5.500h1.500v3H14M1.500 0v2.500M4.500 0v2.500M.5 2.500h5V5L3 6.500.5 5ZM3 6.500V9h2" />
                        <path d="M6 5h6.500v4H6Z" fill="#fff" stroke="none" />
                    </svg>
                </button>
                <button aria-label="Network" className="w-6 flex justify-center">
                    <svg viewBox="0 0 14 14" className="w-[14px] h-[14px]" fill="none" stroke="#fff">
                        <path d="M1 13C1 6 6 1.500 13 1.500" stroke="#a5a5a5" />
                        <path d="M4 13c0-5 4-8.500 9-8.500M7 13c0-3 2.500-5.500 6-5.500M9.500 13c0-2 1.500-3 3.500-3" />
                        <circle cx="12.300" cy="12.500" r="1.300" fill="#fff" stroke="none" />
                    </svg>
                </button>
                <button aria-label="Volume" className="w-6 flex justify-center">
                    <svg viewBox="0 0 17 14" className="w-[17px] h-[14px]" fill="none" stroke="#fff">
                        <path d="M.8 4.500h2.500L7 1v12L3.300 9.500H.8Z" />
                        <path d="M9 5c1 1.300 1 2.700 0 4" />
                        <path d="M11.500 3c2 2.500 2 5.500 0 8M14 1.500c2.500 3.500 2.500 7.500 0 11" stroke="#8f8f8f" />
                    </svg>
                </button>
                <button className="px-[6px]">ENG</button>
                <button className="w-[72px] text-center leading-[18px]">
                    9:15 AM
                    <br />
                    2025-07-20
                </button>
                <button aria-label="Notifications" className="w-10 flex justify-center">
                    <svg viewBox="0 0 16 16" className="w-4 h-4" fill="none" stroke="#fff" strokeWidth="1.200"><path d="M.6 1h14.800v11.500h-5L8 15l-2.400-2.500h-5Z" /></svg>
                </button>
                <div className="w-px h-10 bg-[#777] ml-2 mr-1" />
            </div>
        </footer>
    );
}

export default function App() {
    return (
        <div className="h-screen flex flex-col overflow-hidden font-['Open_Sans','Noto_Sans',sans-serif]">
            <header className="shrink-0 bg-[#15529a]">
                <TabStrip />
                <AddressBar />
                <BookmarkBar />
            </header>
            <div className="flex-1 min-h-0 flex">
                <main className="flex-1 overflow-hidden bg-gray-50">
                    <ProfilePage />
                </main>
                <Scrollbar />
            </div>
            <Taskbar />
        </div>
    );
}
